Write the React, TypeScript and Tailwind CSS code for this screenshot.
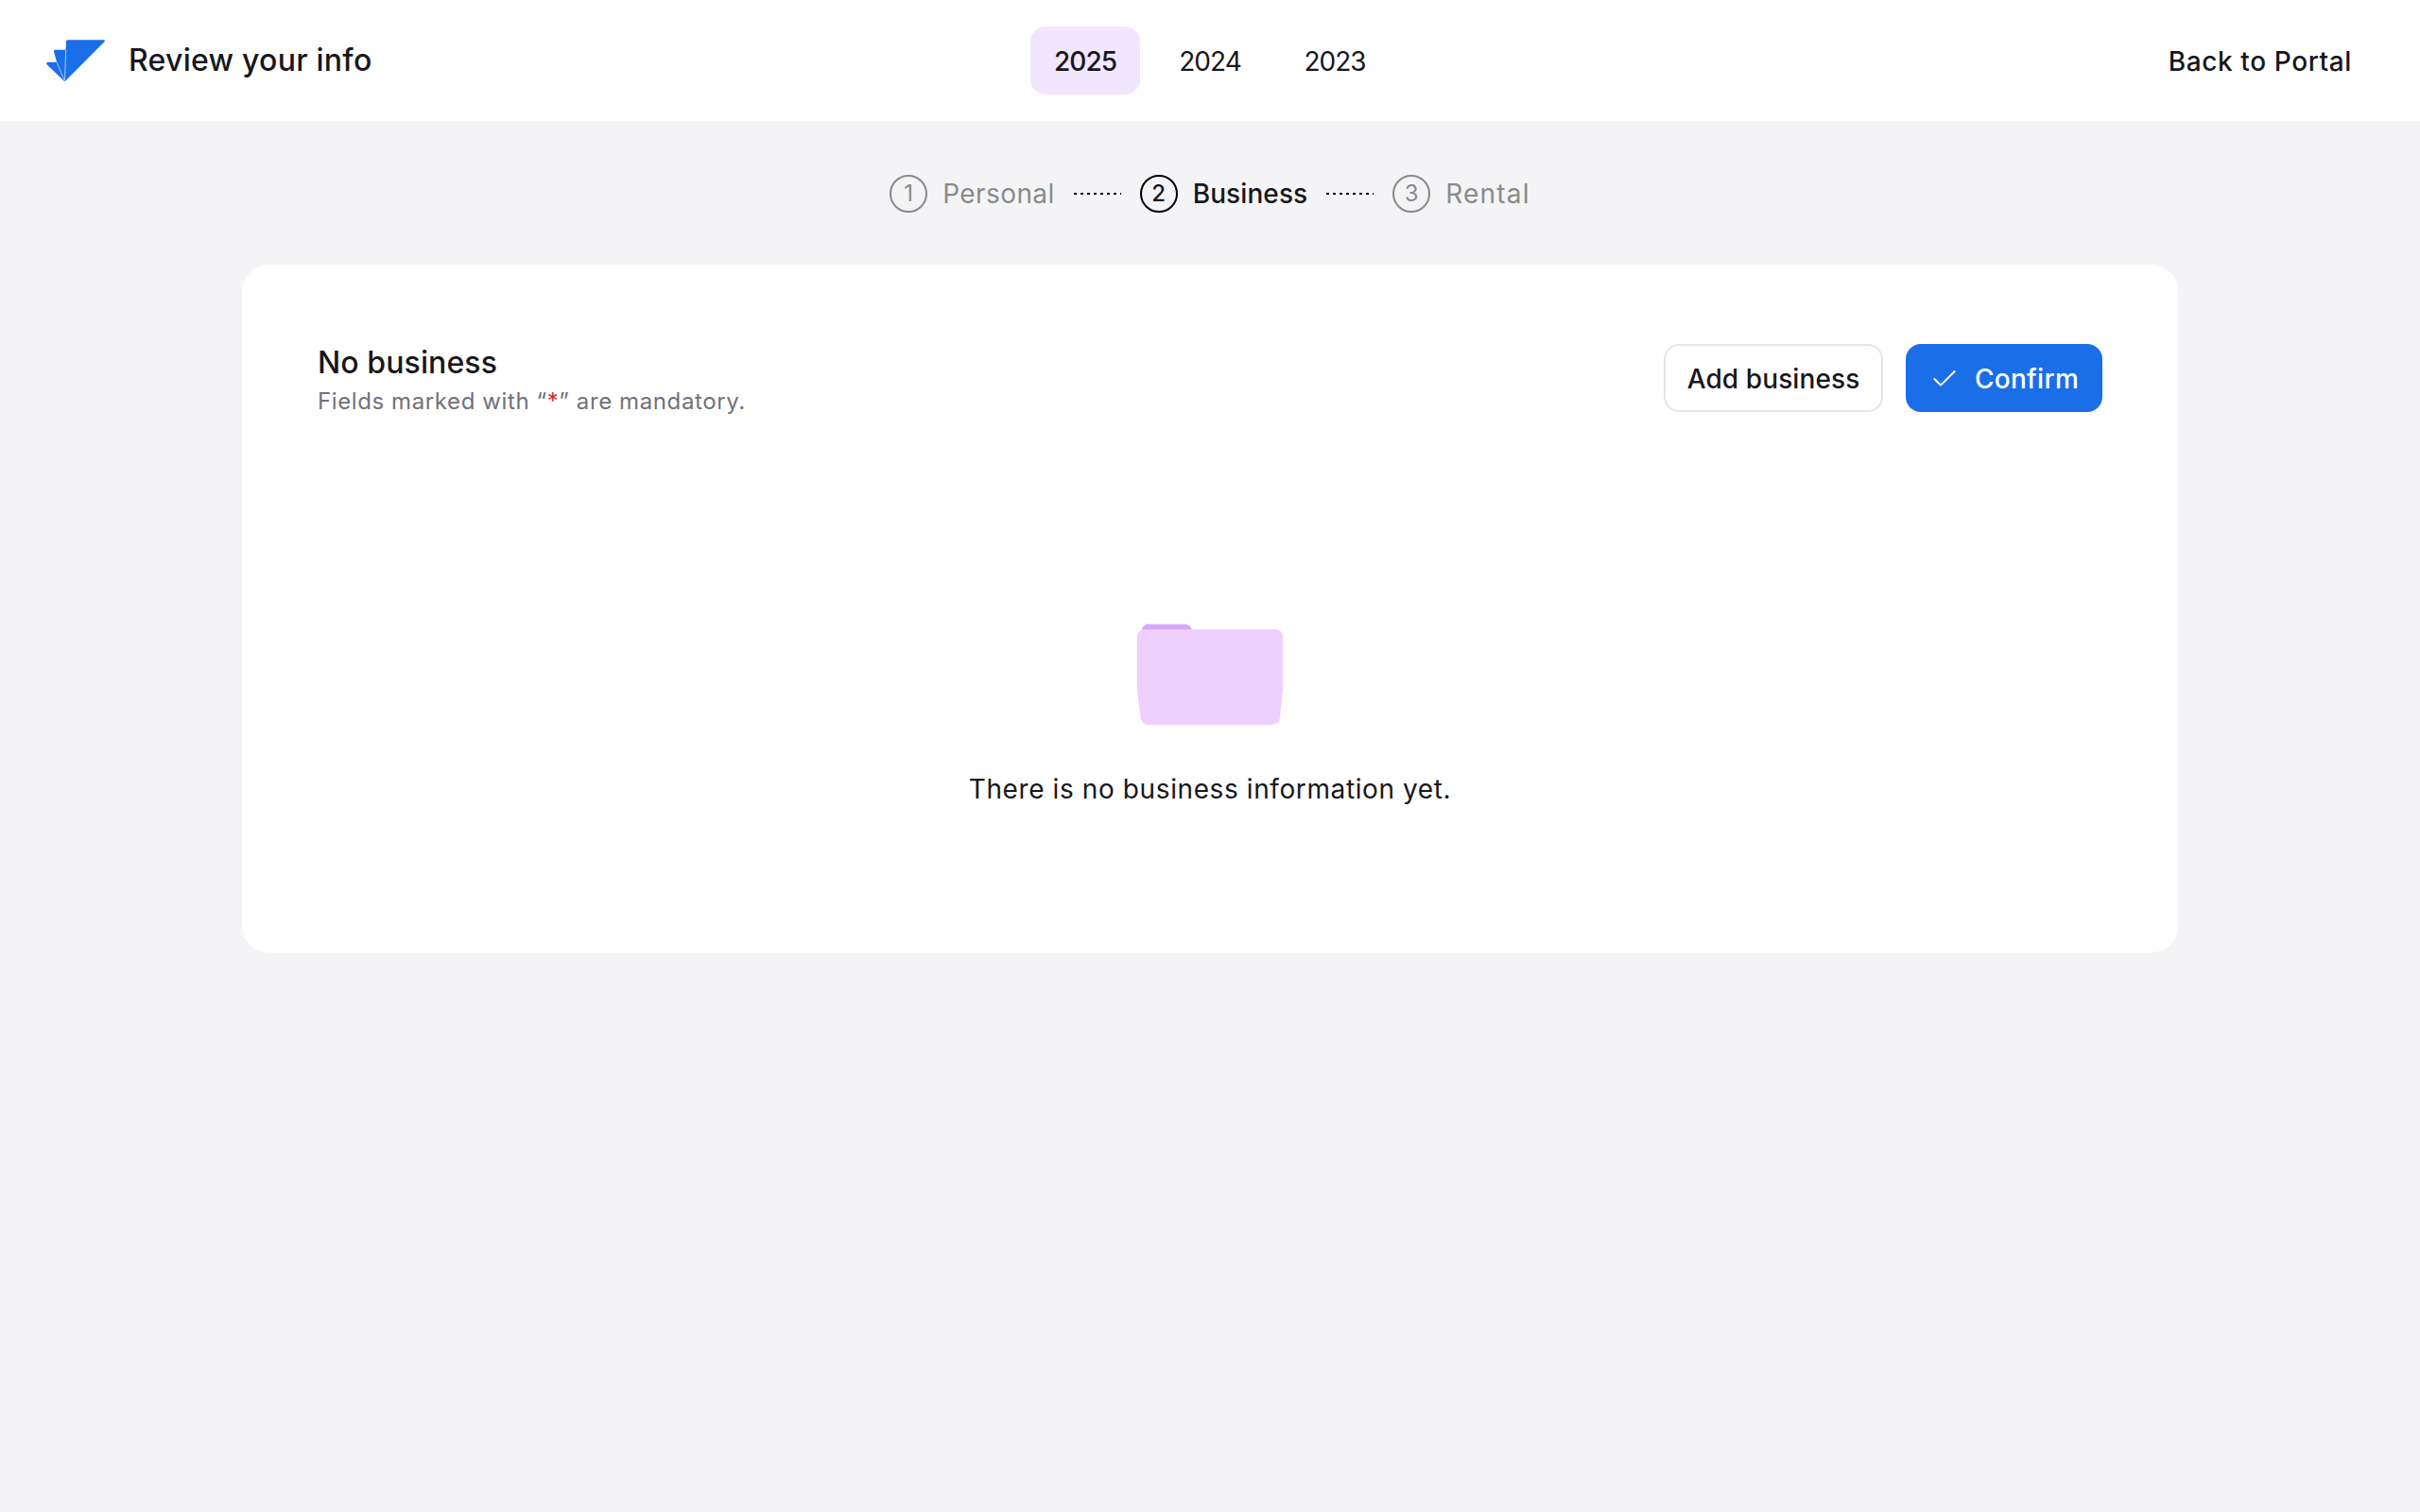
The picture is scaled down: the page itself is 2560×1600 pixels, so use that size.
import { Check } from 'lucide-react';

const years = ['2025', '2024', '2023'];

const steps = [
  { n: 1, label: 'Personal', active: false, tracking: 'tracking-[0.4px]' },
  { n: 2, label: 'Business', active: true, tracking: 'tracking-[0.1px]' },
  { n: 3, label: 'Rental', active: false, tracking: 'tracking-[1.2px]' },
];

function Logo() {
  return (
    <svg width="62" height="44" viewBox="0 0 62 44" fill="none">
      <path
        d="M21 2C21 0.800 21.800 0.300 23 0.300H60.500C61.700 0.300 62.300 1.400 61.400 2.300L20.600 43.300C20 44 19 44 18.300 43.300L0.600 26.200C-0.200 25.400 0.300 23.700 1.500 23.700H11L8 12.500C7.800 11.500 8.300 10.700 9.500 10.700H20.500L21 2Z"
        fill="#1a6fe8"
      />
      <path d="M19.500 43L20.700 11M18.800 42.500L11 23.700" stroke="#a9c9f8" strokeWidth="1" />
    </svg>
  );
}

function Folder() {
  return (
    <svg width="154" height="108" viewBox="0 0 154 108" fill="none">
      <path d="M5 8C5 3 8 0.500 12 0.500H50C54 0.500 57 3 58 7L58 12H5V8Z" fill="#d8a6fb" />
      <path
        d="M0 14C0 9 3 6 8 6H146C151 6 154 9 154 14L154 70L151 99C150.500 104 147 107 142 107H12C7 107 4 104 3.500 99L0 70V14Z"
        fill="#efcfff"
      />
    </svg>
  );
}

export default function App() {
  return (
    <div className="min-h-screen bg-[#f4f4f6] font-['Inter',sans-serif] text-[#17171c]">
      <header className="grid h-[128px] grid-cols-[1fr_auto_1fr] items-center bg-white pl-[49px] pr-[72px]">
        <div className="flex items-center gap-[25px]">
          <Logo />
          <span className="text-[32px] font-medium tracking-[0.25px]">Review your info</span>
        </div>
        <nav className="ml-[23px] flex items-center gap-4">
          {years.map((y, i) => (
            <button
              key={y}
              className={`flex h-[72px] w-[116px] items-center justify-center rounded-2xl pt-0.5 text-[28px] tracking-[-1px] ${
                i === 0 ? 'bg-[#f2e6fe] font-medium' : ''
              }`}
            >
              {y}
            </button>
          ))}
        </nav>
        <a className="justify-self-end pt-0.5 text-[28px] font-medium tracking-[0.6px]">Back to Portal</a>
      </header>

      <div className="mt-[56px] flex items-center justify-center">
        {steps.map((s, i) => (
          <div key={s.n} className="flex items-center">
            {i > 0 && (
              <div className="mx-5 h-0.5 w-[50px] bg-[repeating-linear-gradient(90deg,#000_0_3px,transparent_3px_7px)]" />
            )}
            <span
              className={`flex h-10 w-10 items-center justify-center rounded-full border-2 text-2xl ${
                s.active ? 'border-black font-medium' : 'border-[#8a8a8a] text-[#8a8a8a]'
              }`}
            >
              {s.n}
            </span>
            <span className={`ml-4 text-[28px] ${s.tracking} ${s.active ? 'font-medium' : 'text-[#8a8a8a]'}`}>
              {s.label}
            </span>
          </div>
        ))}
      </div>

      <main className="mx-auto mt-[54px] h-[728px] w-[2048px] rounded-[28px] bg-white px-20 pt-[84px]">
        <div className="flex items-start justify-between">
          <div>
            <h2 className="text-[32px] font-medium leading-10 tracking-[0.1px]">No business</h2>
            <p className="mt-[5px] text-2xl leading-8 tracking-[0.6px] text-[#71717a]">
              Fields marked with “<span className="text-[#d32f2f]">*</span>” are mandatory.
            </p>
          </div>
          <div className="flex gap-6">
            <button className="h-[72px] w-[232px] rounded-2xl border-2 border-[#e5e5e5] pt-0.5 text-[28px] font-medium tracking-[0.1px]">
              Add business
            </button>
            <button className="flex h-[72px] w-[208px] items-center justify-center gap-4 rounded-2xl bg-[#1a6fe8] pt-0.5 text-[28px] font-medium tracking-[0.3px] text-white">
              <Check size={32} strokeWidth={1.5} />
              Confirm
            </button>
          </div>
        </div>
        <div className="mt-[219px] flex flex-col items-center">
          <Folder />
          <p className="mt-[46px] text-[28px] tracking-[0.6px]">There is no business information yet.</p>
        </div>
      </main>
    </div>
  );
}
